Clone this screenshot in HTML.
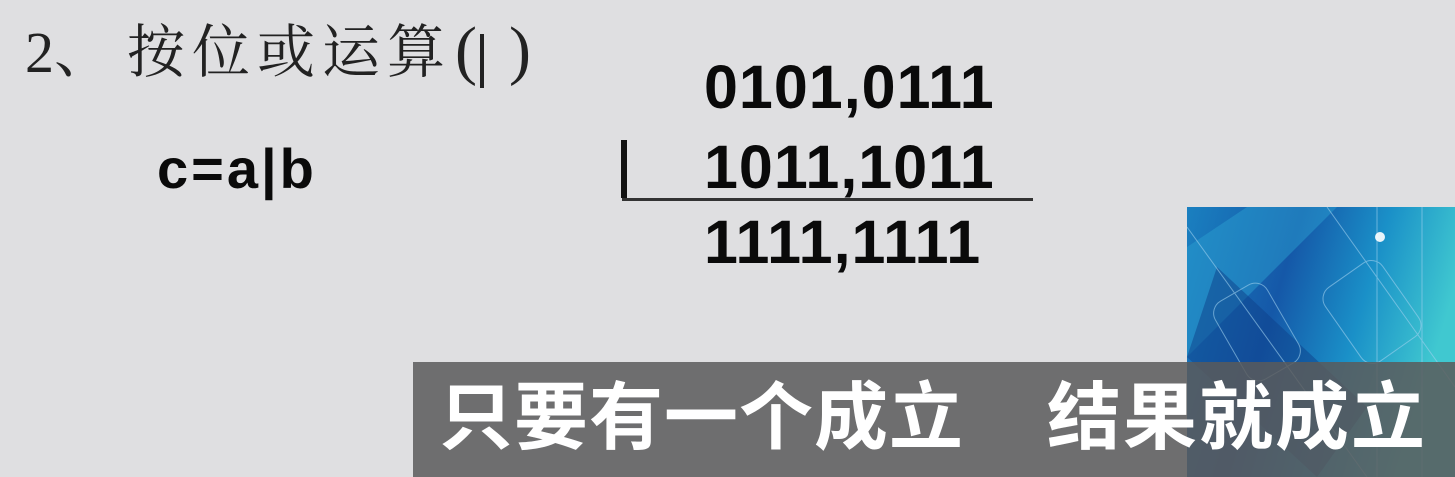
<!DOCTYPE html>
<html><head><meta charset="utf-8"><style>
body{margin:0;width:1455px;height:477px;overflow:hidden;background:#dfdfe1;position:relative;font-family:"Liberation Sans",sans-serif}
.a{position:absolute;line-height:1;white-space:nowrap}
.n{font-weight:bold;font-size:61px;color:#0a0a0a;letter-spacing:1px}
.t{font-size:58px;font-family:'Liberation Serif','Noto Serif CJK SC',serif;color:#222}
</style></head><body>
<div class="a t" style="left:25px;top:24px">2、</div>
<div class="a t" style="left:127px;top:24px;letter-spacing:7px">按位或运算</div>
<div class="a t" style="left:455px;top:18px;font-size:66px">(</div>
<div class="a" style="left:480px;top:34px;width:4px;height:54px;background:#222"></div>
<div class="a t" style="left:509px;top:18px;font-size:66px">)</div>
<div class="a" style="left:157px;top:141px;font-size:56px;font-weight:bold;color:#0a0a0a;letter-spacing:3px">c=a|b</div>
<div class="a n" style="left:704px;top:57px">0101,0111</div>
<div class="a n" style="left:704px;top:137px">1011,1011</div>
<div class="a n" style="left:704px;top:212px">1111,1111</div>
<div class="a" style="left:621px;top:140px;width:6px;height:58px;background:#111"></div>
<div class="a" style="left:622px;top:198px;width:411px;height:3px;background:#333"></div>
<svg class="a" style="left:1187px;top:207px" width="268" height="270" viewBox="0 0 268 270">
<defs><linearGradient id="g" x1="0" y1="0" x2="1" y2="0.3"><stop offset="0" stop-color="#1a80c0"/><stop offset="0.4" stop-color="#1558a8"/><stop offset="0.7" stop-color="#1a90c8"/><stop offset="1" stop-color="#40c8d0"/></linearGradient></defs>
<rect width="268" height="270" fill="url(#g)"/>
<polygon points="0,40 60,0 150,0 0,150" fill="#2a9ed0" opacity="0.5"/>
<polygon points="30,60 180,200 130,270 0,150" fill="#0e3f8a" opacity="0.5"/>
<g fill="none" stroke="#9fd0ee" stroke-width="1" opacity="0.6">
<rect x="40" y="80" width="60" height="90" rx="14" transform="rotate(-30 70 125)"/>
<rect x="150" y="60" width="70" height="90" rx="14" transform="rotate(-35 185 105)"/>
<line x1="0" y1="20" x2="180" y2="270"/><line x1="140" y1="0" x2="268" y2="180"/>
<line x1="190" y1="0" x2="190" y2="270"/><line x1="235" y1="0" x2="235" y2="270"/>
</g>
<circle cx="193" cy="30" r="5" fill="#fff" opacity="0.9"/>
</svg>
<div class="a" style="left:413px;top:362px;width:1042px;height:115px;background:rgba(90,90,90,0.85)"></div>
<div class="a" style="left:439px;top:381px;font-size:74px;font-weight:bold;color:#fff;font-family:'Liberation Sans','Noto Sans CJK SC',sans-serif;letter-spacing:1px">只要有一个成立</div>
<div class="a" style="left:1047px;top:381px;font-size:74px;font-weight:bold;color:#fff;font-family:'Liberation Sans','Noto Sans CJK SC',sans-serif;letter-spacing:2px">结果就成立</div>
</body></html>
